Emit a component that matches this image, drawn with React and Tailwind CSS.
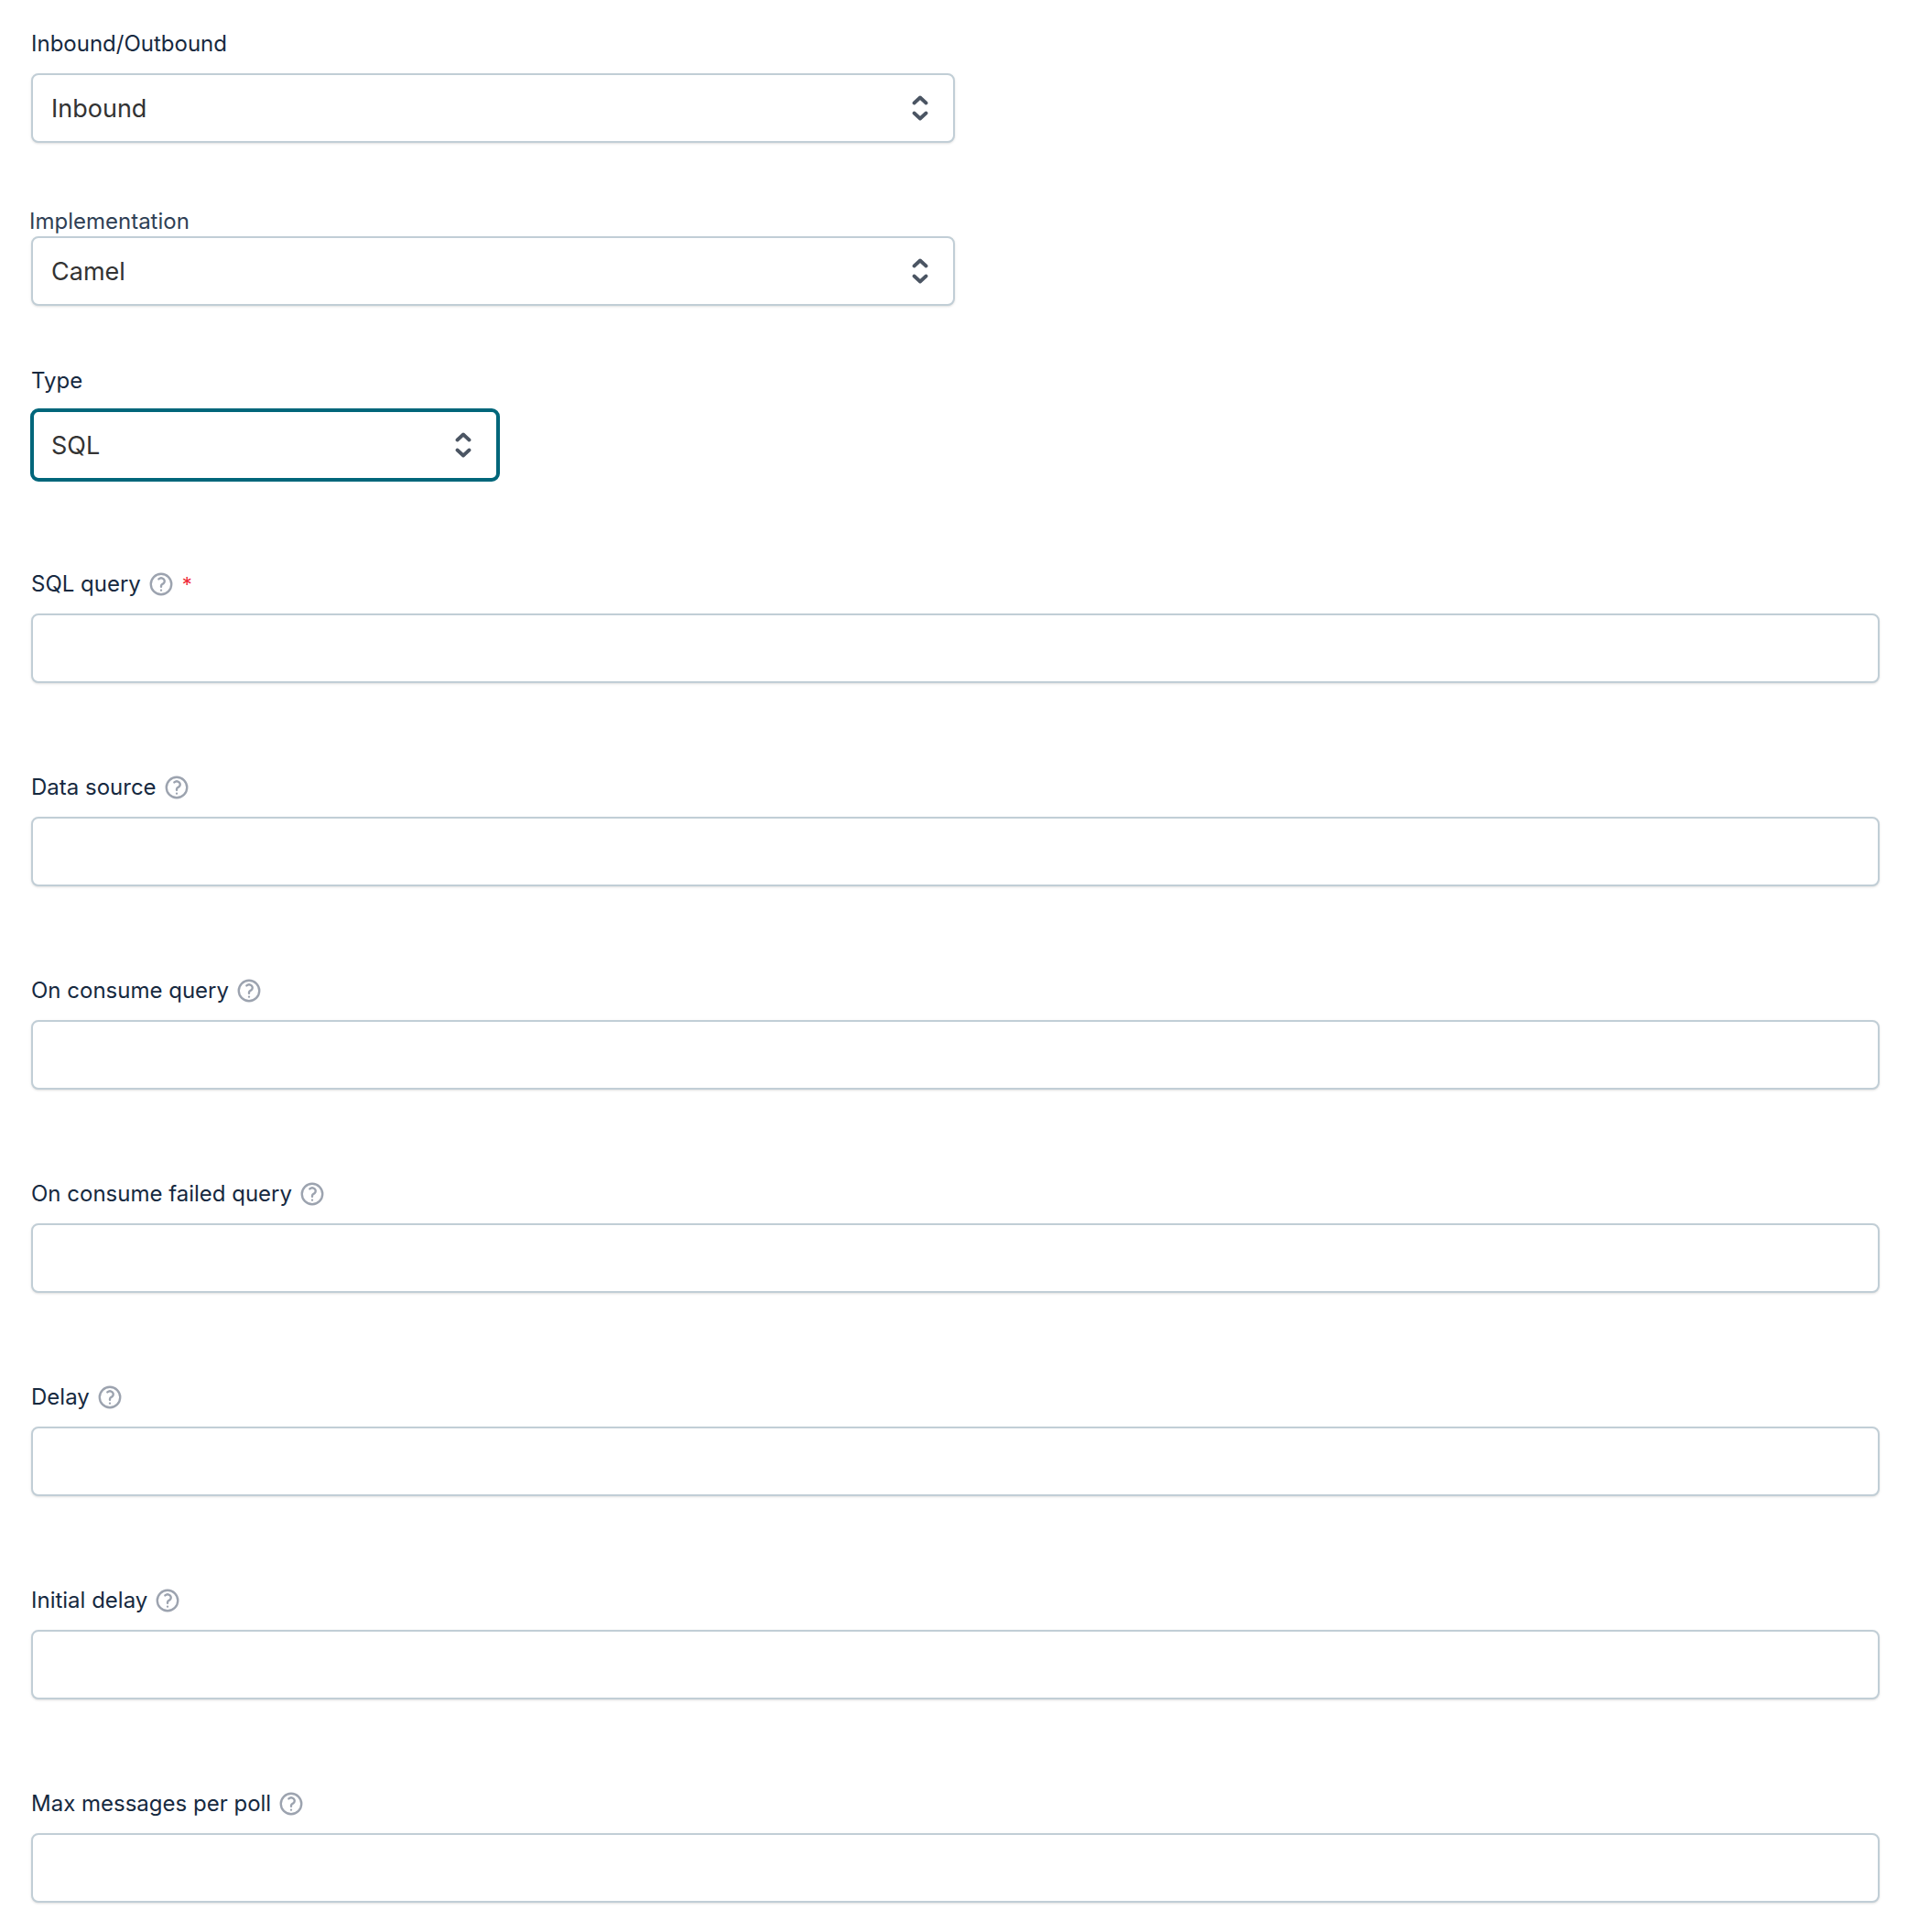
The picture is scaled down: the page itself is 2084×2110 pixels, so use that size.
const labelClass = "flex h-[26px] items-center pt-[2px] text-[24px] font-normal leading-[26px] text-[#16293f]";

function HelpIcon() {
  return (
    <svg viewBox="0 0 24 24" fill="none" stroke="#9ca3af" strokeWidth="1.9" strokeLinecap="round" strokeLinejoin="round" className="ml-[7px] h-[30px] w-[30px]">
      <path d="M9.879 7.519c1.171-1.025 3.071-1.025 4.242 0 1.172 1.025 1.172 2.687 0 3.712-.203.179-.43.326-.67.442-.745.361-1.45.999-1.45 1.827v.75M21 12a9 9 0 11-18 0 9 9 0 0118 0zm-9 5.25h.008v.008H12v-.008z" />
    </svg>
  );
}

function UpDown() {
  return (
    <svg viewBox="0 0 18 30" fill="none" stroke="#4b5563" strokeWidth="3.8" strokeLinecap="round" strokeLinejoin="round" className="h-[30px] w-[18px]">
      <path d="M2.5 9.5L9 3.5l6.5 6" />
      <path d="M2.5 20.5l6.5 6 6.5-6" />
    </svg>
  );
}

function SelectField({ value, focused }) {
  return (
    <button
      type="button"
      className={
        focused
          ? "-ml-[1px] flex h-[80px] w-[513px] items-center justify-between rounded-[9px] border-[4px] border-[#00667a] bg-white pl-[19px] pr-[27px] text-[27px] text-[#333333]"
          : "flex h-[76px] w-[1009px] items-center justify-between rounded-[8px] border-2 border-[#c1ced6] bg-white pl-[20px] pr-[27px] text-[27px] text-[#333333] shadow-sm"
      }
    >
      <span className="pt-[2px]">{value}</span>
      <UpDown />
    </button>
  );
}

function TextField({ label, required }) {
  return (
    <div className="mt-[100px] first:mt-[98px]">
      <div className={labelClass}>
        <span>{label}</span>
        <HelpIcon />
        {required && <span className="ml-[8px] text-[22px] text-[#ef2b3a]">*</span>}
      </div>
      <input type="text" className="mt-[20px] block h-[76px] w-full rounded-[8px] border-2 border-[#c1ced6] bg-white shadow-sm outline-none" />
    </div>
  );
}

export default function App() {
  const fields = [
    "Data source",
    "On consume query",
    "On consume failed query",
    "Delay",
    "Initial delay",
    "Max messages per poll",
  ];

  return (
    <div className="min-h-[2110px] bg-white pl-[34px] pr-[31px] pt-[34px] font-['Inter',sans-serif]">
      <div className={labelClass}>Inbound/Outbound</div>
      <div className="mt-[20px]">
        <SelectField value="Inbound" />
      </div>

      <div className={labelClass + " -ml-[2px] mt-[72px] !text-[#2f3f55]"}>Implementation</div>
      <div className="mt-[4px]">
        <SelectField value="Camel" />
      </div>

      <div className={labelClass + " mt-[68px]"}>Type</div>
      <div className="mt-[18px]">
        <SelectField value="SQL" focused />
      </div>

      <div>
        <TextField label="SQL query" required />
        {fields.map((f) => (
          <TextField key={f} label={f} />
        ))}
      </div>
    </div>
  );
}
